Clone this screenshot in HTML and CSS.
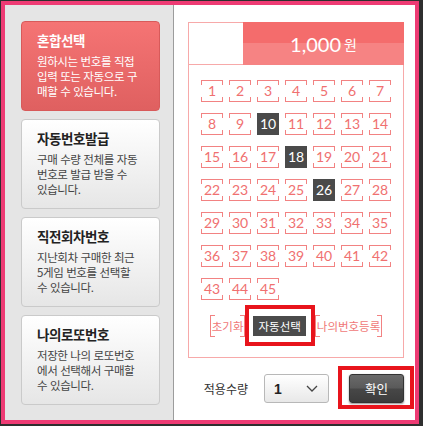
FILE: index.html
```html
<!DOCTYPE html>
<html lang="ko">
<head>
<meta charset="utf-8">
<title>번호선택</title>
<link rel="stylesheet" href="styles.css">
</head>
<body>
<div class="frame">
  <aside class="side">
    <div class="card active">
      <div class="card-title">혼합선택</div>
      <div class="card-desc">원하시는 번호를 직접<br>입력 또는 자동으로 구<br>매할 수 있습니다.</div>
    </div>
    <div class="card">
      <div class="card-title">자동번호발급</div>
      <div class="card-desc">구매 수량 전체를 자동<br>번호로 발급 받을 수<br>있습니다.</div>
    </div>
    <div class="card">
      <div class="card-title">직전회차번호</div>
      <div class="card-desc">지난회차 구매한 최근<br>5게임 번호를 선택할<br>수 있습니다.</div>
    </div>
    <div class="card">
      <div class="card-title">나의로또번호</div>
      <div class="card-desc">저장한 나의 로또번호<br>에서 선택해서 구매할<br>수 있습니다.</div>
    </div>
  </aside>
  <main class="main">
    <div class="board">
      <div class="board-head">
        <div class="head-blank"></div>
        <div class="price"><span class="price-num">1,000</span><span class="price-unit">원</span></div>
      </div>
      <div class="grid">
        <span class="num">1</span><span class="num">2</span><span class="num">3</span><span class="num">4</span><span class="num">5</span><span class="num">6</span><span class="num">7</span>
        <span class="num">8</span><span class="num">9</span><span class="num on">10</span><span class="num">11</span><span class="num">12</span><span class="num">13</span><span class="num">14</span>
        <span class="num">15</span><span class="num">16</span><span class="num">17</span><span class="num on">18</span><span class="num">19</span><span class="num">20</span><span class="num">21</span>
        <span class="num">22</span><span class="num">23</span><span class="num">24</span><span class="num">25</span><span class="num on">26</span><span class="num">27</span><span class="num">28</span>
        <span class="num">29</span><span class="num">30</span><span class="num">31</span><span class="num">32</span><span class="num">33</span><span class="num">34</span><span class="num">35</span>
        <span class="num">36</span><span class="num">37</span><span class="num">38</span><span class="num">39</span><span class="num">40</span><span class="num">41</span><span class="num">42</span>
        <span class="num">43</span><span class="num">44</span><span class="num">45</span>
      </div>
      <div class="actions">
        <span class="bracket-btn">초기화</span>
        <span class="auto-btn">자동선택</span>
        <span class="bracket-btn">나의번호등록</span>
      </div>
    </div>
    <div class="footer">
      <span class="qty-label">적용수량</span>
      <div class="select">
        <span class="select-val">1</span>
        <svg class="chev" width="12" height="7" viewBox="0 0 12 7"><path d="M1 1 L6 6 L11 1" fill="none" stroke="#444" stroke-width="1.3"/></svg>
      </div>
      <span class="ok-btn">확인</span>
    </div>
  </main>
</div>
</body>
</html>
```
FILE: styles.css
```css
html, body {
  margin: 0;
  padding: 0;
  background: #2f2f2f;
}
body {
  width: 423px;
  height: 426px;
  overflow: hidden;
  font-family: "Noto Sans CJK KR", "Noto Sans", sans-serif;
}
.frame {
  margin: 1px 0 0 1px;
  width: 418px;
  height: 423px;
  box-sizing: border-box;
  border: 4px solid #ee3b74;
  display: flex;
  background: #fff;
}
.side {
  width: 169px;
  flex: none;
  box-sizing: border-box;
  background: #e5e5e5;
  border-right: 1px solid #9c9c9c;
  padding: 16px 13px 0 16px;
  display: flex;
  flex-direction: column;
  gap: 8px;
}
.card {
  height: 90px;
  box-sizing: border-box;
  border: 1px solid #cacaca;
  border-radius: 4px;
  background: linear-gradient(#ffffff, #e6e6e6);
  padding: 10px 2px 0 15px;
  color: #444;
  white-space: nowrap;
}
.card.active {
  border-color: #d85a5a;
  background: linear-gradient(#f57474, #df6060);
  color: #fff;
}
.card-title {
  font-size: 13.5px;
  font-weight: bold;
  line-height: 16px;
  color: #222;
  letter-spacing: -0.4px;
}
.card.active .card-title {
  color: #fff;
}
.card-desc {
  margin-top: 6px;
  font-size: 11.5px;
  letter-spacing: -0.4px;
  line-height: 15px;
}
.main {
  flex: 1;
  padding: 17px 11px 0 14px;
}
.board {
  border: 1px solid #f7a9a9;
  padding-bottom: 20px;
}
.board-head {
  display: flex;
  height: 41px;
  border-bottom: 1px solid #f7a9a9;
}
.head-blank {
  width: 54px;
}
.price {
  flex: 1;
  margin: -1px -1px -1px 0;
  background: linear-gradient(#f46c6c 50%, #f68383 50%);
  color: #fff;
  display: flex;
  align-items: center;
  justify-content: center;
  gap: 3px;
}
.price-num {
  font-family: Lato, "Noto Sans", sans-serif;
  font-size: 20px;
}
.price-unit {
  font-size: 14px;
}
.grid {
  display: grid;
  grid-template-columns: repeat(7, 22px);
  column-gap: 6px;
  row-gap: 11px;
  padding: 15px 12px 0;
}
.num {
  width: 22px;
  height: 22px;
  box-sizing: border-box;
  border-top: 1px solid #f28282;
  border-bottom: 1px solid #f28282;
  background:
    linear-gradient(#f28282, #f28282) left top / 1px 4px no-repeat,
    linear-gradient(#f28282, #f28282) right top / 1px 4px no-repeat,
    linear-gradient(#f28282, #f28282) left bottom / 1px 4px no-repeat,
    linear-gradient(#f28282, #f28282) right bottom / 1px 4px no-repeat;
  font-family: Lato, "Noto Sans", sans-serif;
  font-size: 14px;
  line-height: 20px;
  text-align: center;
  color: #f07070;
}
.num.on {
  border: none;
  background: #4a4a4a;
  color: #fff;
  line-height: 22px;
}
.actions {
  display: flex;
  justify-content: center;
  margin-top: 15px;
}
.bracket-btn {
  height: 22px;
  box-sizing: border-box;
  border-left: 1px solid #f28282;
  border-right: 1px solid #f28282;
  background:
    linear-gradient(#f28282, #f28282) left top / 4px 1px no-repeat,
    linear-gradient(#f28282, #f28282) right top / 4px 1px no-repeat,
    linear-gradient(#f28282, #f28282) left bottom / 4px 1px no-repeat,
    linear-gradient(#f28282, #f28282) right bottom / 4px 1px no-repeat;
  padding: 0 1px;
  font-size: 11.5px;
  line-height: 22px;
  color: #f07878;
}
.auto-btn {
  position: relative;
  height: 20px;
  margin: 1px 9px 0 8px;
  padding: 0 5px;
  background: #4b4b4b;
  color: #fff;
  font-size: 11.5px;
  line-height: 20px;
}
.auto-btn::after {
  content: "";
  position: absolute;
  left: -8px;
  right: -9px;
  top: -11px;
  bottom: -10px;
  border: 4px solid #e8141c;
}
.footer {
  display: flex;
  align-items: center;
  justify-content: flex-end;
  margin-top: 16px;
}
.qty-label {
  font-size: 12px;
  color: #333;
  margin-right: 16px;
}
.select {
  width: 65px;
  height: 29px;
  box-sizing: border-box;
  border: 1px solid #b8b8b8;
  border-radius: 3px;
  background: linear-gradient(#ffffff, #e8e8e8);
  display: flex;
  align-items: center;
  justify-content: space-between;
  padding: 0 10px 0 9px;
  margin-right: 20px;
}
.select-val {
  font-family: "Liberation Sans", Arial, sans-serif;
  font-weight: bold;
  font-size: 14px;
  color: #222;
}
.ok-btn {
  position: relative;
  width: 55px;
  height: 29px;
  box-sizing: border-box;
  border: 1px solid #333;
  border-radius: 3px;
  background: linear-gradient(#6a6a6a, #5a5a5a 48%, #474747 52%, #3c3c3c);
  box-shadow: 0 1px 2px rgba(0, 0, 0, 0.45);
  color: #fff;
  font-size: 12.5px;
  line-height: 27px;
  text-align: center;
}
.ok-btn::after {
  content: "";
  position: absolute;
  left: -12px;
  right: -11px;
  top: -9px;
  bottom: -7px;
  border: 4px solid #e8141c;
}
```
